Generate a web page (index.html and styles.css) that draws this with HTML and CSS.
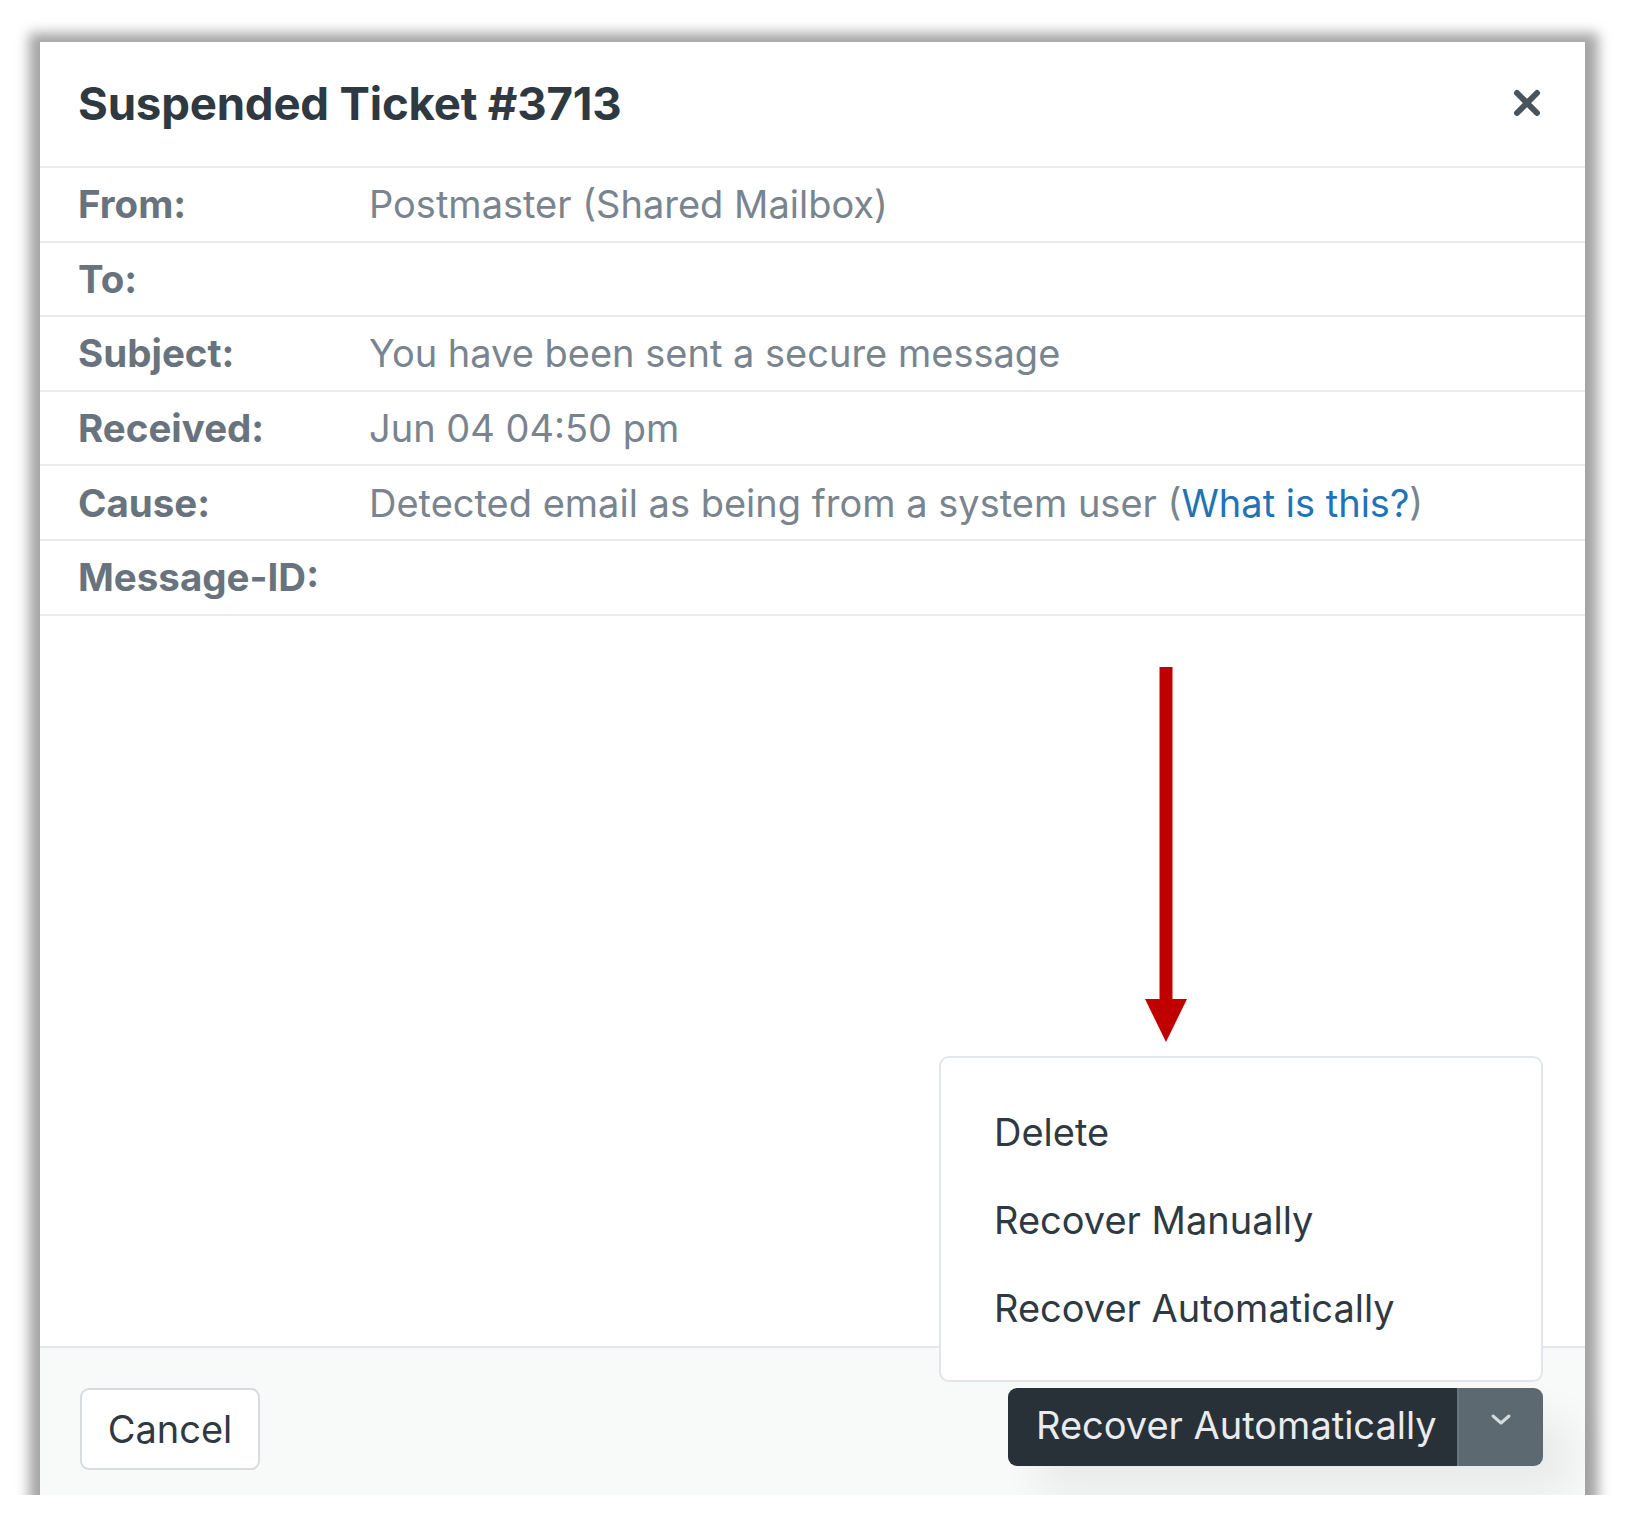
FILE: index.html
```html
<!DOCTYPE html>
<html lang="en">
<head>
<meta charset="utf-8">
<title>Suspended Ticket #3713</title>
<link rel="stylesheet" href="styles.css">
</head>
<body>
<div class="modal">
  <header class="modal-header">
    <h1 class="title">Suspended Ticket #3713</h1>
    <button class="close" aria-label="Close">
      <svg width="28" height="28" viewBox="0 0 28 28"><path d="M4 4 L24 24 M24 4 L4 24" stroke="#49545c" stroke-width="6" stroke-linecap="round" fill="none"/></svg>
    </button>
  </header>
  <dl class="details">
    <div class="row"><dt>From:</dt><dd>Postmaster (Shared Mailbox)</dd></div>
    <div class="row"><dt>To:</dt><dd></dd></div>
    <div class="row"><dt>Subject:</dt><dd>You have been sent a secure message</dd></div>
    <div class="row"><dt>Received:</dt><dd>Jun 04 04:50 pm</dd></div>
    <div class="row"><dt>Cause:</dt><dd>Detected email as being from a system user (<a class="link" href="#">What is this?</a>)</dd></div>
    <div class="row"><dt>Message-ID:</dt><dd></dd></div>
  </dl>
  <div class="body">
    <svg class="arrow" width="44" height="376" viewBox="0 0 44 376">
      <rect x="15.5" y="0" width="13" height="334" fill="#c00000"/>
      <polygon points="1,332 43,332 22,375" fill="#c00000"/>
    </svg>
  </div>
  <footer class="footer">
    <button class="btn cancel">Cancel</button>
    <div class="split">
      <ul class="menu">
        <li class="menu-item">Delete</li>
        <li class="menu-item">Recover Manually</li>
        <li class="menu-item">Recover Automatically</li>
      </ul>
      <button class="btn primary">Recover Automatically</button>
      <button class="btn toggle" aria-label="More">
        <svg width="22" height="14" viewBox="0 0 22 14"><path d="M3 3 L11 10 L19 3" stroke="#d5dadd" stroke-width="3" stroke-linecap="round" stroke-linejoin="round" fill="none"/></svg>
      </button>
    </div>
  </footer>
</div>
</body>
</html>
```

FILE: styles.css
```css
* { box-sizing: border-box; }

html, body {
  margin: 0;
  padding: 0;
  background: #ffffff;
}

body {
  font-family: Inter, "Noto Sans", "Liberation Sans", sans-serif;
  padding: 42px 0 0 40px;
}

.modal {
  width: 1545px;
  height: 1453px;
  background: #ffffff;
  display: flex;
  flex-direction: column;
  box-shadow: 1px 3px 12px 12px rgba(0, 0, 0, 0.36);
}

.modal-header {
  height: 126px;
  flex: none;
  display: flex;
  align-items: center;
  justify-content: space-between;
  padding: 0 44px 2px 38px;
  border-bottom: 2px solid #e9ebed;
}

.title {
  margin: 0;
  font-size: 45.6px;
  font-weight: 700;
  color: #2f3941;
  letter-spacing: -0.2px;
}

.close {
  border: 0;
  background: none;
  padding: 0;
  width: 28px;
  height: 28px;
  display: flex;
  cursor: pointer;
}

.details {
  margin: 0;
  flex: none;
}

.row {
  height: 74.6px;
  display: flex;
  align-items: center;
  padding-left: 38px;
  border-bottom: 2px solid #e9ebed;
  font-size: 38px;
}

.row dt {
  width: 291px;
  flex: none;
  font-weight: 700;
  font-size: 38.5px;
  color: #68737d;
}

.row dd {
  margin: 0;
  color: #7a848e;
}

.link {
  color: #1f73b7;
  text-decoration: none;
}

.body {
  flex: 1;
  position: relative;
}

.arrow {
  position: absolute;
  left: 1104px;
  top: 51px;
  display: block;
}

.footer {
  flex: none;
  height: 149px;
  border-top: 2px solid #e3e6e8;
  background: #f8f9f9;
  display: flex;
  align-items: flex-start;
  justify-content: space-between;
  padding: 40px 42px 0 40px;
}

.btn {
  font-family: inherit;
  font-size: 38px;
  border: 0;
  margin: 0;
  cursor: pointer;
}

.cancel {
  width: 180px;
  height: 82px;
  background: #ffffff;
  border: 2px solid #d8dcde;
  border-radius: 9px;
  color: #2f3941;
  padding: 0;
}

.split {
  position: relative;
  display: flex;
  height: 78px;
  border-radius: 9px;
  box-shadow: 30px 30px 40px rgba(0, 0, 0, 0.06);
}

.primary {
  width: 449px;
  height: 78px;
  background: #283038;
  color: #e9ebed;
  border-radius: 9px 0 0 9px;
  text-align: left;
  padding: 0 0 4px 28px;
}

.toggle {
  width: 86px;
  height: 78px;
  background: #5c6970;
  border-left: 2px solid #6b777e;
  border-radius: 0 9px 9px 0;
  display: flex;
  align-items: center;
  justify-content: center;
  padding: 0 0 14px 0;
}

.menu {
  position: absolute;
  right: 0;
  bottom: calc(100% + 6px);
  width: 604px;
  margin: 0;
  padding: 30px 0 28px;
  list-style: none;
  background: #ffffff;
  border: 2px solid #e3e6e8;
  border-radius: 10px;
}

.menu-item {
  height: 88px;
  display: flex;
  align-items: center;
  padding-left: 53px;
  font-size: 38px;
  color: #2f3941;
}
```
